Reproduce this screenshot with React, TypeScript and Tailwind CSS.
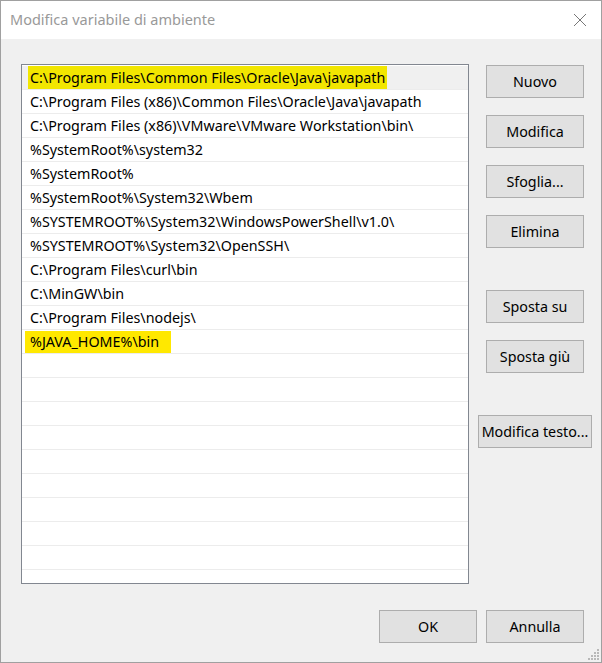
import React from "react";

const paths = [
  "C:\\Program Files\\Common Files\\Oracle\\Java\\javapath",
  "C:\\Program Files (x86)\\Common Files\\Oracle\\Java\\javapath",
  "C:\\Program Files (x86)\\VMware\\VMware Workstation\\bin\\",
  "%SystemRoot%\\system32",
  "%SystemRoot%",
  "%SystemRoot%\\System32\\Wbem",
  "%SYSTEMROOT%\\System32\\WindowsPowerShell\\v1.0\\",
  "%SYSTEMROOT%\\System32\\OpenSSH\\",
  "C:\\Program Files\\curl\\bin",
  "C:\\MinGW\\bin",
  "C:\\Program Files\\nodejs\\",
  "%JAVA_HOME%\\bin",
];

const font = { fontFamily: '"Noto Sans", "Open Sans", sans-serif' };

function Btn({ label, className = "" }: { label: string; className?: string }) {
  return (
    <button
      className={
        "h-[33px] bg-[#e1e1e1] border border-[#adadad] text-[14.3px] text-black flex items-center justify-center " +
        className
      }
    >
      {label}
    </button>
  );
}

export default function App() {
  const rows = Array.from({ length: 22 }, (_, i) => paths[i] ?? "");
  return (
    <div
      className="w-[602px] h-[663px] border border-[#a0a0a0] bg-[#f0f0f0] flex flex-col relative overflow-hidden"
      style={font}
    >
      {/* title bar */}
      <div className="h-[38px] bg-white flex items-center justify-between pl-[9px] pr-[14px] shrink-0">
        <span className="text-[14.5px] text-[#999999]">Modifica variabile di ambiente</span>
        <svg width="14" height="14" viewBox="0 0 14 14">
          <path d="M1 1L13 13M13 1L1 13" stroke="#777" strokeWidth="1" />
        </svg>
      </div>

      <div className="flex">
        {/* list */}
        <div className="ml-[20px] mt-[25px] w-[448px] h-[520px] border border-[#828790] bg-white overflow-hidden pt-px">
          {rows.map((p, i) => {
            const sel = i === 0;
            const hl = i === 0 || i === 11;
            return (
              <div
                key={i}
                className={
                  "h-[24px] flex items-center border-b border-[#ececec] text-[14.3px] text-black " +
                  (sel ? "bg-[#f0f0f0]" : "")
                }
              >
                {hl ? (
                  i === 0 ? (
                    <span className="ml-[6px] pl-[2px] pr-[2px] h-[23px] flex items-center bg-[#f2e600]">{p}</span>
                  ) : (
                    <span className="ml-[3px] pl-[5px] pr-[12px] h-[22px] flex items-center bg-[#ffe800]">{p}</span>
                  )
                ) : (
                  <span className="ml-[8px]">{p}</span>
                )}
              </div>
            );
          })}
        </div>

        {/* buttons */}
        <div className="ml-[9px] mt-[26px] w-[114px] flex flex-col items-center">
          <Btn label="Nuovo" className="w-[98px]" />
          <Btn label="Modifica" className="w-[98px] mt-[17px]" />
          <Btn label="Sfoglia..." className="w-[98px] mt-[17px]" />
          <Btn label="Elimina" className="w-[98px] mt-[17px]" />
          <Btn label="Sposta su" className="w-[98px] mt-[42px]" />
          <Btn label="Sposta giù" className="w-[98px] mt-[17px]" />
          <Btn label="Modifica testo..." className="w-[114px] mt-[42px]" />
        </div>
      </div>

      {/* bottom buttons */}
      <div className="flex justify-end gap-[9px] mt-[26px] pr-[17px]">
        <Btn label="OK" className="w-[98px]" />
        <Btn label="Annulla" className="w-[98px]" />
      </div>

      {/* resize grip */}
      <svg className="absolute right-[1px] bottom-[1px]" width="12" height="12" viewBox="0 0 12 12">
        {[
          [9, 0], [9, 3], [6, 3], [9, 6], [6, 6], [3, 6], [9, 9], [6, 9], [3, 9], [0, 9],
        ].map(([x, y], k) => (
          <rect key={k} x={x} y={y} width="2" height="2" fill="#b8b8b8" />
        ))}
      </svg>
    </div>
  );
}
